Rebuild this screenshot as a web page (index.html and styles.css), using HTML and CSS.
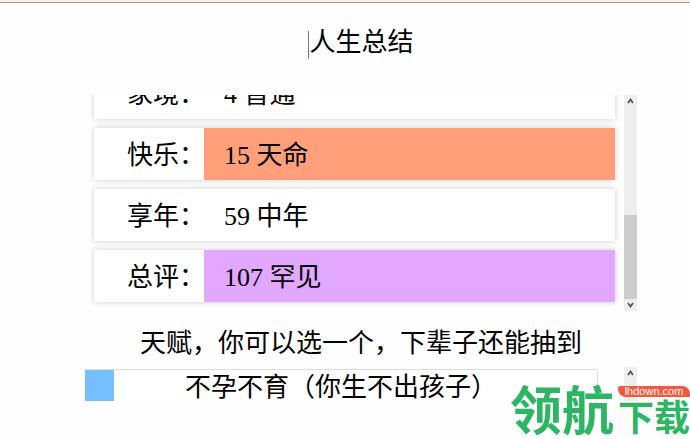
FILE: index.html
```
<!DOCTYPE html>
<html lang="zh-CN">
<head>
    <meta charset="UTF-8">
    <meta name="viewport" content="width=device-width, initial-scale=1.0">
    <title>人生总结</title>
    <link rel="stylesheet" href="styles.css">
</head>
<body>
    <div class="top-bar"></div>
    <main class="summary">
        <h1><span class="caret"></span>人生总结</h1>

        <div class="pane stats-pane">
            <dl class="stats">
                <div class="stat"><dt>家境：</dt><dd>4 普通</dd></div>
                <div class="stat"><dt>快乐：</dt><dd class="legend">15 天命</dd></div>
                <div class="stat"><dt>享年：</dt><dd>59 中年</dd></div>
                <div class="stat"><dt>总评：</dt><dd class="rare">107 罕见</dd></div>
            </dl>
            <div class="scrollbar">
                <svg class="arrow" viewBox="0 0 13 12"><path d="M4 8 L6.5 4.5 L9 8"/></svg>
                <div class="thumb"></div>
                <svg class="arrow" viewBox="0 0 13 12"><path d="M4 4 L6.5 7.5 L9 4"/></svg>
            </div>
        </div>

        <h2>天赋，你可以选一个，下辈子还能抽到</h2>

        <div class="pane talent-pane">
            <button class="talent" type="button">
                <span class="talent-mark"></span>
                <span class="talent-name">不孕不育（你生不出孩子）</span>
            </button>
            <div class="scrollbar">
                <svg class="arrow" viewBox="0 0 13 12"><path d="M4 8 L6.5 4.5 L9 8"/></svg>
            </div>
        </div>
    </main>

    <div class="watermark">
        <span class="mark-large">领航</span>
        <div class="mark-side">
            <span class="mark-site">lhdown.com</span>
            <span class="mark-small">下载</span>
        </div>
    </div>
</body>
</html>
```

FILE: styles.css
```
* {
    box-sizing: border-box;
}
body {
    margin: 0;
    background: #fefefe;
    color: #000;
    font-family: "Liberation Serif", "Noto Sans CJK SC", serif;
    font-size: 26px;
    line-height: 32px;
    overflow: hidden;
}
.top-bar {
    height: 3px;
    background: #ffeee6;
    border-bottom: 1px solid #b09488;
}
.summary {
    padding: 24px 53px 0 85px;
}
h1, h2 {
    margin: 0;
    font-size: 26px;
    font-weight: normal;
    text-align: center;
}
h1 {
    margin-bottom: 36px;
}
h2 {
    margin: 17px 0 7px;
    white-space: nowrap;
}
.caret {
    display: inline-block;
    width: 1px;
    height: 28px;
    background: #777;
    vertical-align: middle;
}
.pane {
    display: flex;
    overflow: hidden;
}
.stats-pane {
    height: 216px;
}
.stats {
    flex: 1;
    display: flex;
    flex-direction: column;
    justify-content: flex-end;
    gap: 9px;
    margin: 0;
    padding: 0 9px 9px;
    overflow: hidden;
}
.stat {
    flex: none;
    display: flex;
    height: 52px;
    background: #fff;
    box-shadow: 0 0 6px rgba(0, 0, 0, 0.2);
    line-height: 56px;
}
.stat dt {
    width: 110px;
    padding-left: 33px;
    white-space: nowrap;
}
.stat dd {
    flex: 1;
    margin: 0;
    padding-left: 20px;
}
.legend {
    background: #ffa07a;
}
.rare {
    background: #e2a7ff;
}
.scrollbar {
    display: flex;
    flex-direction: column;
    justify-content: space-between;
    width: 13px;
    background: #eee;
}
.arrow {
    width: 13px;
    height: 12px;
    fill: none;
    stroke: #505050;
    stroke-width: 1.6;
}
.thumb {
    height: 84px;
    margin-top: auto;
    background: #cdcdcd;
}
.talent-pane {
    height: 34px;
    justify-content: space-between;
    gap: 26px;
}
.talent {
    flex: 1;
    display: flex;
    height: 40px;
    margin-top: 2px;
    padding: 0;
    border: 1px solid #ddd;
    border-left: 0;
    border-radius: 2px;
    background: #fff;
    color: inherit;
    font: inherit;
    position: relative;
}
.talent-mark {
    position: absolute;
    left: 0;
    top: 0;
    width: 29px;
    height: 100%;
    background: #75bfff;
}
.talent-name {
    flex: 1;
    text-align: center;
    line-height: 36px;
    white-space: nowrap;
}
/* site badge over the bottom right corner */
.watermark {
    position: absolute;
    right: 0;
    top: 380px;
    display: flex;
    gap: 4px;
    color: #2cb563;
    font-family: "Noto Sans CJK SC", sans-serif;
    font-weight: bold;
    white-space: nowrap;
}
.mark-large {
    font-size: 52px;
    line-height: 56px;
}
.mark-side {
    display: flex;
    flex-direction: column;
    padding-top: 6px;
}
.mark-site {
    border-radius: 2px 8px 0 8px;
    background: #f9573d;
    color: #fff;
    font: 11px/11px "Liberation Sans", sans-serif;
    text-align: center;
}
.mark-small {
    font-size: 36px;
    line-height: 36px;
}
```
